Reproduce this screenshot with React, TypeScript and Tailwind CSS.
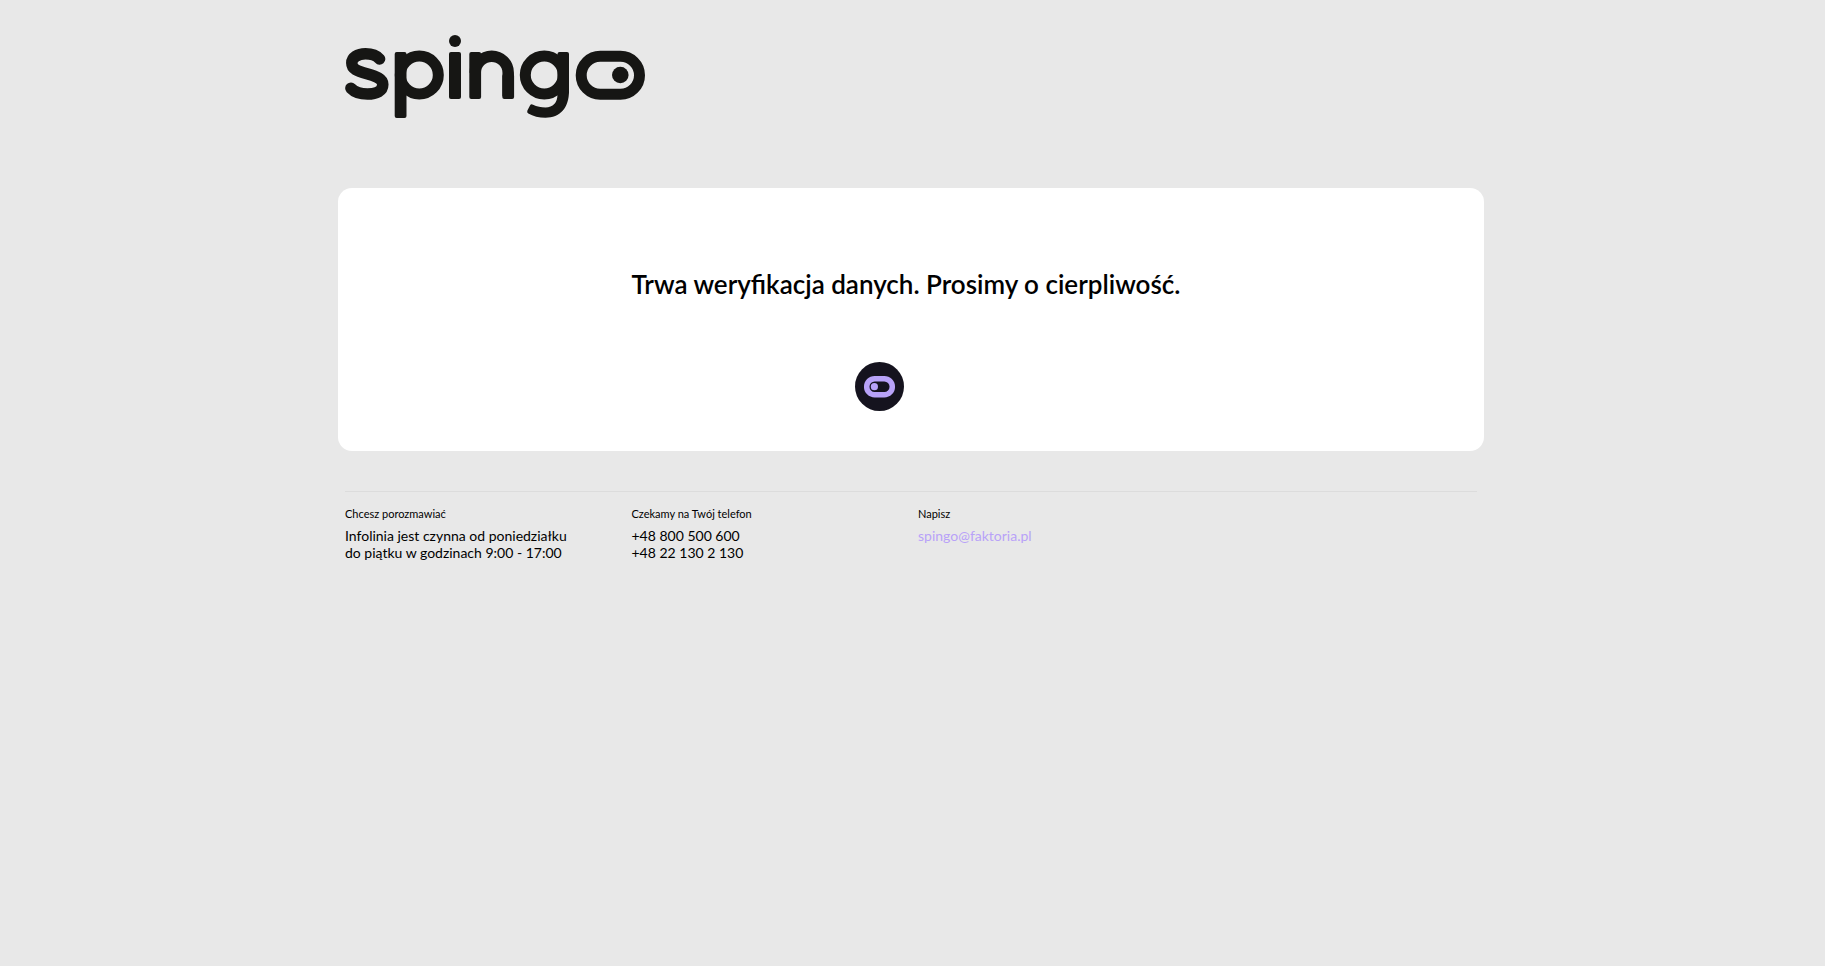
function SpingoLogo() {
  return (
    <svg
      width="301"
      height="85"
      viewBox="0 0 301 85"
      role="img"
      aria-label="spingo"
      fill="none"
      stroke="#161614"
      strokeWidth="11.5"
    >
      {/* s */}
      <path
        strokeLinecap="round"
        d="M34.6 25C31.5 21.5 27 19.8 20.5 19.8C12.500 19.8 6.8 23.5 6.8 29C6.8 35 12 36.8 22 39.8C31.5 42.6 37.8 44.5 37.8 50.5C37.8 57 31.5 60 22.5 60C15.5 60 9.5 58 5.9 54.2"
      />
      {/* p */}
      <circle cx="74.3" cy="41" r="19" strokeWidth="11" />
      {/* n arch */}
      <path d="M130.2 38.7A16.5 16.5 0 0 1 163.2 38.7V62" />
      {/* g */}
      <circle cx="199.3" cy="41" r="19" strokeWidth="11" />
      {/* o */}
      <rect x="236.2" y="22.2" width="58.3" height="38" rx="19" strokeWidth="11" />
      <g fill="#161614" stroke="none">
        <rect x="49.7" y="18" width="11.8" height="66" rx="2" />
        <circle cx="110" cy="7" r="6" />
        <rect x="104" y="18" width="12" height="47" rx="2" />
        <rect x="124.3" y="18" width="11.8" height="47" rx="2" />
        <rect x="157.3" y="40" width="11.8" height="25" rx="2" />
        <rect x="212.5" y="18" width="11.5" height="42" rx="2" />
        <path d="M224 57C224 74 215 83.700 200.500 83.700C194 83.700 188 82 183.300 79.400Q181.500 78.400 182.400 76.500L185 71.500Q186 69.700 188 70.700C192 72.600 196 73.400 200.500 73.400C208 73.400 212.500 69 212.500 60V57Z" />
        <circle cx="275.3" cy="41" r="8.3" />
      </g>
    </svg>
  );
}

function Loader() {
  return (
    <svg width="49" height="49" viewBox="0 0 49 49" role="status" aria-label="Ładowanie">
      <circle cx="24.5" cy="24.5" r="24.5" fill="#15131e" />
      <rect x="11.7" y="16.7" width="25.6" height="16" rx="8" fill="none" stroke="#b8a2f8" strokeWidth="5.5" />
      <circle cx="19.4" cy="24.7" r="3.6" fill="#b8a2f8" />
    </svg>
  );
}

export default function App() {
  return (
    <div className="min-h-screen bg-[#e8e8e8] pr-[3px] font-['Lato',sans-serif] text-black">
      <div className="mx-auto max-w-[1146px]">
        <header className="px-[7px] pt-[34px] pb-[69px]">
          <SpingoLogo />
        </header>

        <main className="flex flex-col items-center rounded-[14px] bg-white pt-[79px] pb-10">
          <h1 className="pr-[10px] text-[26px] leading-[34px] font-semibold">
            Trwa weryfikacja danych. Prosimy o cierpliwość.
          </h1>
          <div className="pt-[61px] pr-16">
            <Loader />
          </div>
        </main>

        <footer className="pt-10">
          <hr className="mx-[7px] border-[#dcdcdc]" />
          <div className="grid grid-cols-4 pt-[14px] text-[14px] leading-[17px]">
            <section className="px-[7px]">
              <h2 className="mb-[5px] text-[11px] leading-4">Chcesz porozmawiać</h2>
              <p>
                Infolinia jest czynna od poniedziałku
                <br />
                do piątku w godzinach 9:00 - 17:00
              </p>
            </section>
            <section className="px-[7px]">
              <h2 className="mb-[5px] text-[11px] leading-4">Czekamy na Twój telefon</h2>
              <p>
                +48 800 500 600
                <br />
                +48 22 130 2 130
              </p>
            </section>
            <section className="px-[7px]">
              <h2 className="mb-[5px] text-[11px] leading-4">Napisz</h2>
              <a href="mailto:spingo@faktoria.pl" className="text-[#b8a2f8]">
                spingo@faktoria.pl
              </a>
            </section>
          </div>
        </footer>
      </div>
    </div>
  );
}
